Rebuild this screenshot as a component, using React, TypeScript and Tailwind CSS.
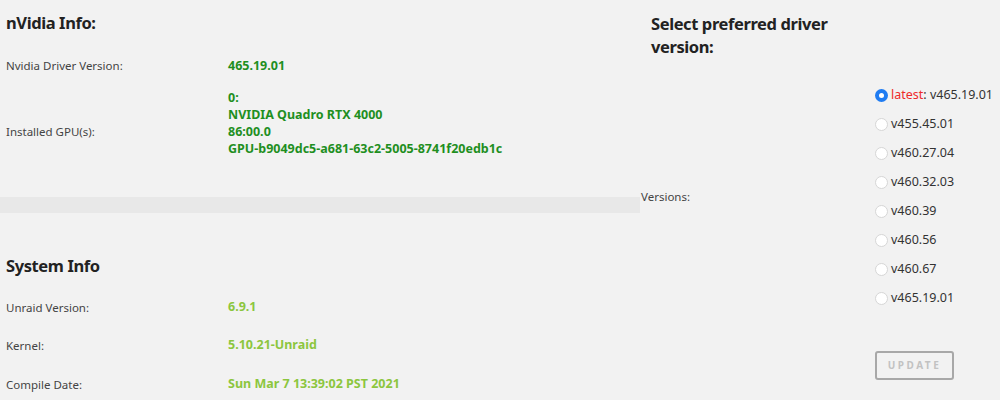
const labelCls = "w-[222px] shrink-0 text-[11.5px] text-[#444]";
const headCls = "text-[16.5px] font-bold tracking-[-0.4px] text-[#222]";

const versions = ["v455.45.01", "v460.27.04", "v460.32.03", "v460.39", "v460.56", "v460.67", "v465.19.01"];

function Radio({ checked }: { checked?: boolean }) {
  if (checked) {
    return (
      <span className="flex h-[13px] w-[13px] shrink-0 items-center justify-center rounded-full bg-[#1f7cf2]">
        <span className="h-[5px] w-[5px] rounded-full bg-white" />
      </span>
    );
  }
  return <span className="h-[13px] w-[13px] shrink-0 rounded-full border border-[#d6d6d6] bg-white" />;
}

export default function App() {
  return (
    <div
      className="flex h-[400px] w-[1000px] overflow-hidden bg-[#f2f2f2] text-[#333]"
      style={{ fontFamily: '"Noto Sans", "Open Sans", sans-serif' }}
    >
      {/* left column */}
      <div className="flex w-[640px] shrink-0 flex-col">
        <div className="h-[197px] shrink-0 px-[6px]">
          <h2 className={"flex h-[48px] items-center pb-[1px] " + headCls}>nVidia Info:</h2>
          <div className="flex h-[36px] items-center">
            <span className={labelCls}>Nvidia Driver Version:</span>
            <span className="text-[12.5px] font-bold text-[#1f8f1f]">465.19.01</span>
          </div>
          <div className="mt-[5px] flex">
            <span className={labelCls + " pt-[34px] leading-[17px]"}>Installed GPU(s):</span>
            <div className="flex flex-col text-[12.5px] font-bold leading-[17px] text-[#1f8f1f]">
              <span>0:</span>
              <span>NVIDIA Quadro RTX 4000</span>
              <span>86:00.0</span>
              <span>GPU-b9049dc5-a681-63c2-5005-8741f20edb1c</span>
            </div>
          </div>
        </div>
        <div className="h-[16px] shrink-0 bg-[#e8e8e8]" />
        <div className="shrink-0 px-[6px]">
          <h2 className={"flex h-[74px] items-center pt-[33px] " + headCls}>System Info</h2>
          <div className="mt-[1px]">
            {[
              ["Unraid Version:", "6.9.1"],
              ["Kernel:", "5.10.21-Unraid"],
              ["Compile Date:", "Sun Mar 7 13:39:02 PST 2021"],
            ].map(([k, v]) => (
              <div key={k} className="flex h-[38.5px] items-center">
                <span className={labelCls}>{k}</span>
                <span className="text-[12.5px] font-bold text-[#8cc63e]">{v}</span>
              </div>
            ))}
          </div>
        </div>
      </div>

      {/* right column */}
      <div className="flex flex-1 flex-col">
        <h2 className={"pl-[11px] pt-[12px] leading-[23px] " + headCls}>
          Select preferred driver
          <br />
          version:
        </h2>
        <div className="mt-[23px] flex items-center">
          <span className="w-[235px] shrink-0 pl-[1px] text-[11.5px] text-[#444]">Versions:</span>
          <div className="flex flex-col">
            <label className="flex h-[29px] items-center gap-[3px] text-[12.5px]">
              <Radio checked />
              <span>
                <span className="text-[#ee2a2a]">latest</span>: v465.19.01
              </span>
            </label>
            {versions.map((v) => (
              <label key={v} className="flex h-[29px] items-center gap-[3px] text-[12.5px]">
                <Radio />
                <span>{v}</span>
              </label>
            ))}
          </div>
        </div>
        <div className="mt-[38px] pl-[235px]">
          <button className="h-[29px] w-[79px] rounded-[3px] border-2 border-[#a8a8a8] text-[10px] font-bold tracking-[2.5px] text-[#c2c2c2]">
            UPDATE
          </button>
        </div>
      </div>
    </div>
  );
}
